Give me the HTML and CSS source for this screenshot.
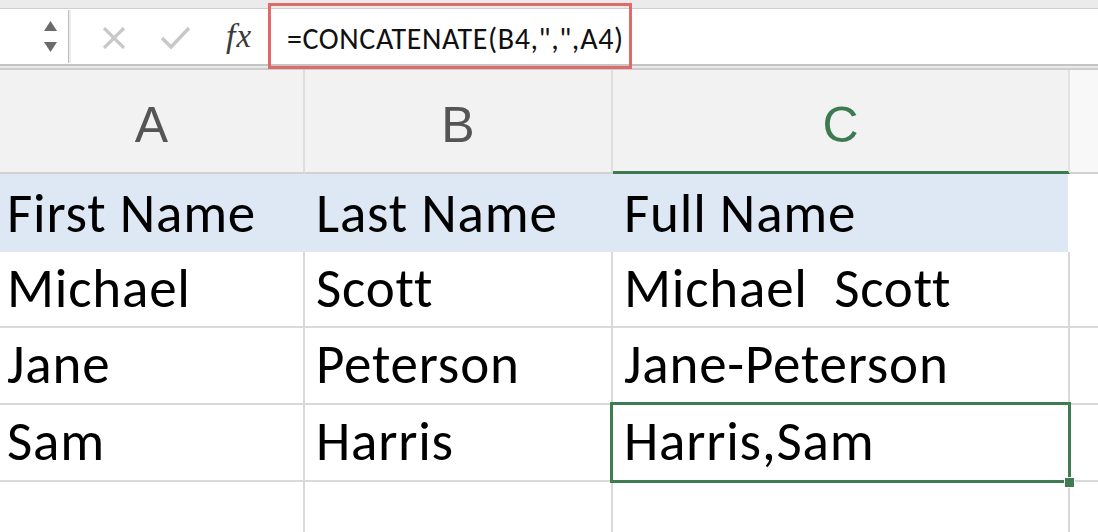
FILE: index.html
```html
<!DOCTYPE html>
<html>
<head>
<meta charset="utf-8">
<link rel="stylesheet" href="styles.css">
</head>
<body>
<div class="app">
  <div class="topstrip"></div>
  <div class="formulabar">
    <div class="namebox">
      <svg class="stepper" width="16" height="34" viewBox="0 0 16 34">
        <polygon points="1,10 14,10 7.5,0" fill="#6b6b6b"/>
        <polygon points="1,21 14,21 7.5,31" fill="#6b6b6b"/>
      </svg>
    </div>
    <div class="sep"></div>
    <div class="actions">
      <svg class="ico-x" width="24" height="22" viewBox="0 0 24 22">
        <path d="M2 1 L22 21 M22 1 L2 21" stroke="#c8c8c8" stroke-width="3.2" fill="none"/>
      </svg>
      <svg class="ico-check" width="32" height="24" viewBox="0 0 32 24">
        <path d="M2 12 L11 21 L29 2" stroke="#c8c8c8" stroke-width="3.4" fill="none"/>
      </svg>
      <span class="fx"><span class="f">f</span>x</span>
    </div>
    <div class="formula">=CONCATENATE(B4,",",A4)</div>
  </div>
  <div class="barbottom"></div>

  <div class="sheet">
    <div class="colhead">A</div>
    <div class="colhead">B</div>
    <div class="colhead active">C</div>
    <div class="colhead last"></div>

    <div class="cell r1">First Name</div>
    <div class="cell r1">Last Name</div>
    <div class="cell r1 c">Full Name</div>
    <div class="cell r1 d"></div>

    <div class="cell r2">Michael</div>
    <div class="cell r2">Scott</div>
    <div class="cell r2">Michael&nbsp; Scott</div>
    <div class="cell r2 d"></div>

    <div class="cell r3">Jane</div>
    <div class="cell r3">Peterson</div>
    <div class="cell r3">Jane-Peterson</div>
    <div class="cell r3 d"></div>

    <div class="cell r4">Sam</div>
    <div class="cell r4">Harris</div>
    <div class="cell r4 selected">Harris,Sam<span class="handle"></span></div>
    <div class="cell r4 d"></div>

    <div class="cell r5"></div>
    <div class="cell r5"></div>
    <div class="cell r5"></div>
    <div class="cell r5 d"></div>
  </div>
</div>
</body>
</html>
```

FILE: styles.css
```css
* { box-sizing: border-box; }
html, body { margin: 0; padding: 0; background: #fff; }
body { width: 1098px; height: 532px; overflow: hidden; font-family: Calibri, Carlito, Lato, "Open Sans", sans-serif; }

.app { width: 1098px; height: 532px; display: flex; flex-direction: column; }

.topstrip { height: 9px; background: #ebebeb; border-bottom: 1px solid #cdcdcd; }

.formulabar { height: 55px; background: #fff; display: flex; align-items: stretch; }
.namebox { width: 68px; display: flex; align-items: center; justify-content: flex-end; padding-right: 9px; }
.stepper { display: block; margin-top: 2px; }
.sep { width: 3px; margin: 1px 0 1px; border-left: 1px solid #bdbdbd; border-right: 2px solid #ececec; }
.actions { width: 197px; display: flex; align-items: center; }
.ico-x { margin-left: 31px; margin-top: 2px; }
.ico-check { margin-left: 34px; margin-top: 2px; }
.fx { margin-left: 34px; font-family: "Liberation Serif", "DejaVu Serif", serif; font-style: italic; font-size: 33px; color: #3a3a3a; margin-top: -2px; letter-spacing: 1px; }
.fx .f { font-size: 34px; }

.formula { position: relative; margin-left: 0; width: 364px; padding-left: 19px; display: flex; align-items: center; font-size: 30px; color: #111; letter-spacing: 0.6px; padding-top: 3px; }
.formula::after { content: ""; position: absolute; left: 0; right: 0; top: -6px; bottom: -5px; border: 3px solid #e06a69; }

.barbottom { height: 6px; border-top: 2px solid #c4c4c4; background: #e9e9e9; border-bottom: 2px solid #cdcdcd; }

.sheet { flex: 1; display: grid; grid-template-columns: 305px 308px 457px 1fr; grid-template-rows: 104px 78px 76px 77px 77px 1fr; }

.colhead { background: #f2f2f2; border-right: 2px solid #dedede; border-bottom: 2px solid #d2d2d2; display: flex; align-items: center; justify-content: center; font-family: "Liberation Sans", Arial, sans-serif; font-size: 50px; color: #555; padding-top: 8px; }
.colhead.active { color: #3e7a4f; border-bottom: 3px solid #3e7a4f; border-right-color: #e2e2e2; padding-top: 9px; }
.colhead.last { background: #f8f8f8; border-right: none; }

.cell { border-right: 2px solid #d9d9d9; border-bottom: 2px solid #d9d9d9; font-size: 55px; color: #000; padding-left: 11px; line-height: 73px; white-space: nowrap; letter-spacing: 0.8px; }
.cell.d { border-right: none; }
.cell.r1 { background: #dee8f5; border-right-color: #dee8f5; border-bottom: none; line-height: 79px; }
.cell.r1.c { border-right-color: #fff; }
.cell.r1.d { background: #fff; }
.cell.r5 { border-bottom: none; }

.sheet > .cell:nth-child(4n+1) { padding-left: 7px; }

.cell.selected { position: relative; }
.cell.selected::after { content: ""; position: absolute; left: -3px; right: -3px; top: -3px; bottom: -3px; border: 3px solid #3f7c51; }
.handle { position: absolute; right: -7px; bottom: -8px; width: 11px; height: 11px; background: #3f7c51; border: 1px solid #fff; z-index: 2; }
```
